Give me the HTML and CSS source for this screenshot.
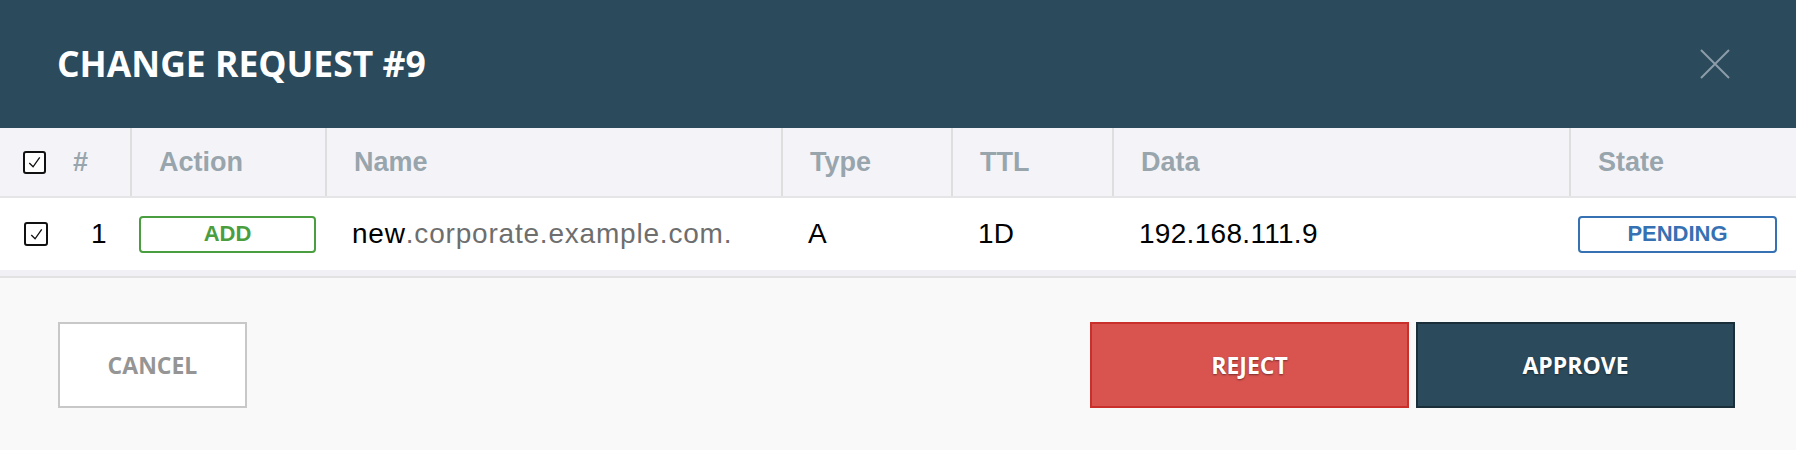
FILE: index.html
```html
<!DOCTYPE html>
<html lang="en">
<head>
<meta charset="utf-8">
<title>Change Request #9</title>
<link rel="stylesheet" href="styles.css">
</head>
<body>
<div class="modal">
  <header class="modal-header">
    <h1 class="modal-title">CHANGE REQUEST #9</h1>
    <button class="close" aria-label="Close">
      <svg viewBox="0 0 30 30" width="30" height="30"><path d="M1 1 L29 29 M29 1 L1 29" stroke="#8c9da9" stroke-width="2" fill="none"/></svg>
    </button>
  </header>
  <div class="grid">
    <div class="grid-row head">
      <div class="cell cb"><span class="check"><svg viewBox="0 0 20 20" width="19" height="19"><path d="M4.5 10.5 L8.5 14.5 L15.5 4.5" stroke="#111" stroke-width="1.4" fill="none"/></svg></span></div>
      <div class="cell num">#</div>
      <div class="cell sep">Action</div>
      <div class="cell sep">Name</div>
      <div class="cell sep">Type</div>
      <div class="cell sep">TTL</div>
      <div class="cell sep">Data</div>
      <div class="cell sep">State</div>
    </div>
    <div class="grid-row body">
      <div class="cell cb"><span class="check row-check"><svg viewBox="0 0 20 20" width="19" height="19"><path d="M4.5 10.5 L8.5 14.5 L15.5 4.5" stroke="#111" stroke-width="1.4" fill="none"/></svg></span></div>
      <div class="cell num-val">1</div>
      <div class="cell badge-cell"><span class="badge add">ADD</span></div>
      <div class="cell txt name">new<span class="zone">.corporate.example.com.</span></div>
      <div class="cell txt">A</div>
      <div class="cell txt">1D</div>
      <div class="cell txt">192.168.111.9</div>
      <div class="cell badge-cell"><span class="badge pending">PENDING</span></div>
    </div>
  </div>
  <footer class="modal-footer">
    <button class="btn cancel">CANCEL</button>
    <div class="actions">
      <button class="btn reject">REJECT</button>
      <button class="btn approve">APPROVE</button>
    </div>
  </footer>
</div>
</body>
</html>
```

FILE: styles.css
```css
html, body {
  margin: 0;
  padding: 0;
  background: #f9f9f9;
}
body {
  width: 1796px;
  height: 450px;
  overflow: hidden;
  font-family: "Liberation Sans", Arial, sans-serif;
}
.modal {
  display: flex;
  flex-direction: column;
  height: 450px;
}
.modal-header {
  height: 128px;
  box-sizing: border-box;
  background: #2b4a5c;
  display: flex;
  align-items: center;
  justify-content: space-between;
  padding: 0 66px 0 57px;
}
.modal-title {
  margin: 0;
  font-family: "Open Sans", sans-serif;
  font-weight: 700;
  font-size: 35.5px;
  letter-spacing: 0;
  color: #ffffff;
  line-height: 1;
}
.close {
  border: 0;
  background: none;
  padding: 0;
  width: 30px;
  height: 30px;
  display: block;
}
.close svg { display: block; }

.grid {
  background: #f1f1f5;
  padding-bottom: 6px;
  border-bottom: 2px solid #e2e2e2;
}
.grid-row {
  display: grid;
  grid-template-columns: 58px 72px 195px 456px 170px 161px 457px 227px;
  align-items: stretch;
}
.grid-row.head {
  height: 70px;
  box-sizing: border-box;
  background: #f4f4f8;
  border-bottom: 2px solid #e5e5e8;
  font-weight: 700;
  font-size: 27px;
  color: #98a5ad;
}
.grid-row.body {
  height: 72px;
  background: #ffffff;
  font-size: 28px;
  color: #000000;
}
.cell {
  display: flex;
  align-items: center;
  box-sizing: border-box;
  padding-left: 27px;
  white-space: nowrap;
}
.cell.txt {
  letter-spacing: 0.3px;
}
.cell.txt.name {
  letter-spacing: 0.8px;
}
.cell.sep {
  border-left: 2px solid #dedede;
}
.cell.cb {
  padding-left: 23px;
}
.cell.num {
  padding-left: 15px;
}
.cell.num-val {
  padding-left: 33px;
}
.check {
  display: flex;
  align-items: center;
  justify-content: center;
  width: 23px;
  height: 23px;
  box-sizing: border-box;
  border: 2px solid #111111;
  border-radius: 3px;
  background: #ffffff;
}
.check.row-check {
  margin-left: 1px;
  width: 24px;
  height: 24px;
}
.check svg { display: block; }
.zone {
  color: #6e6e6e;
}
.badge-cell {
  padding-left: 9px;
}
.badge {
  display: flex;
  align-items: center;
  justify-content: center;
  height: 37px;
  box-sizing: border-box;
  border: 2px solid;
  border-radius: 4px;
  font-weight: 700;
  font-size: 22px;
  background: #ffffff;
}
.badge.add {
  width: 177px;
  color: #4a9e3f;
  border-color: #4a9e3f;
}
.badge.pending {
  width: 199px;
  color: #3571b3;
  border-color: #3571b3;
}

.modal-footer {
  flex: 1;
  background: #f9f9f9;
  display: flex;
  justify-content: space-between;
  align-items: flex-start;
  padding: 44px 61px 0 58px;
}
.actions {
  display: flex;
  gap: 7px;
}
.btn {
  font-family: "Open Sans", sans-serif;
  font-weight: 700;
  font-size: 23px;
  height: 86px;
  box-sizing: border-box;
  border: 2px solid;
  border-radius: 0;
  padding: 0;
  cursor: pointer;
}
.btn.cancel {
  width: 189px;
  background: #ffffff;
  border-color: #c8c8c8;
  color: #959595;
}
.btn.reject {
  width: 319px;
  background: #d9534f;
  border-color: #c9302c;
  color: #ffffff;
  text-shadow: 0 1px 2px rgba(0, 0, 0, 0.45);
}
.btn.approve {
  width: 319px;
  background: #2b4a5c;
  border-color: #1b2f3b;
  color: #ffffff;
  text-shadow: 0 1px 2px rgba(0, 0, 0, 0.45);
}
```
